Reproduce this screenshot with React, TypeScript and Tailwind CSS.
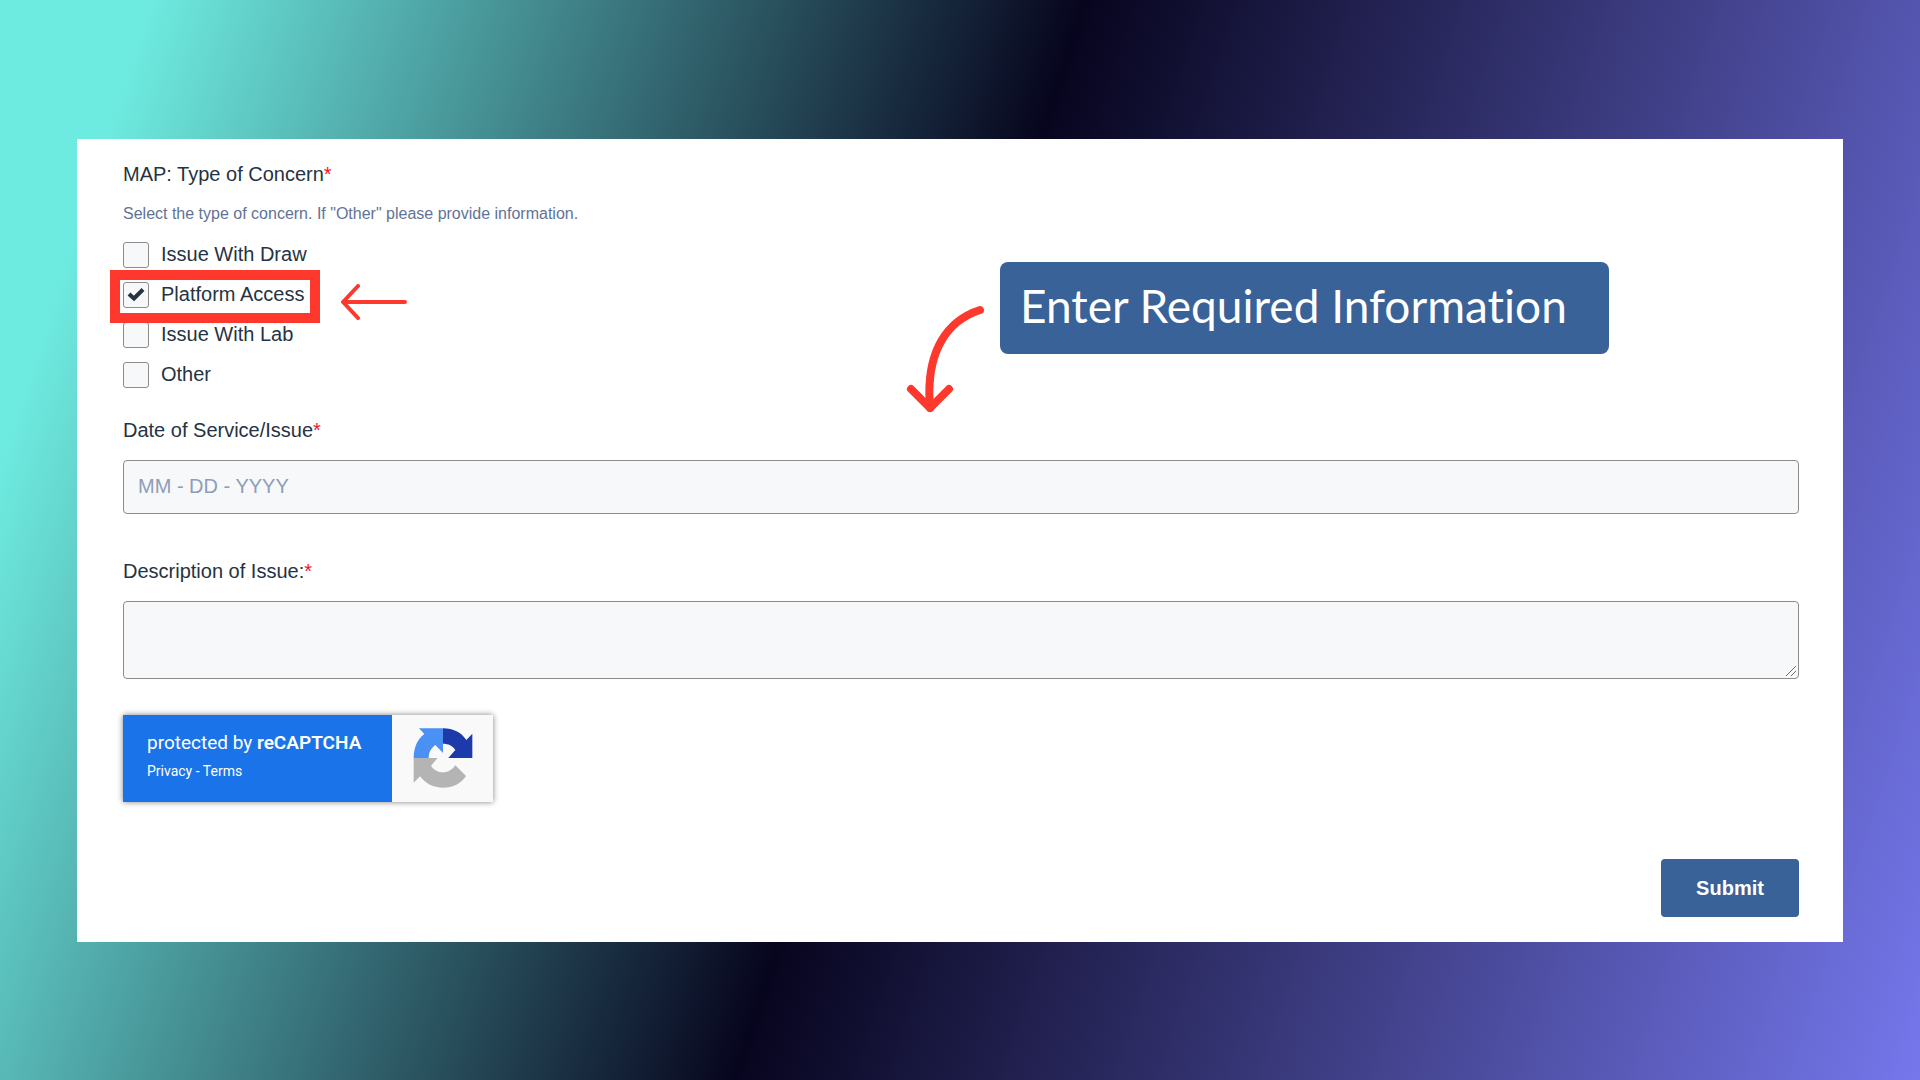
import { useState } from "react";

const CONCERNS = ["Issue With Draw", "Platform Access", "Issue With Lab", "Other"];
const HIGHLIGHTED = "Platform Access";

function Required() {
  return <span className="text-[#f5141c]">*</span>;
}

/** Short red arrow pointing at the highlighted option. */
function LeftArrow() {
  return (
    <svg
      className="absolute top-[14px] left-[230px] h-[36px] w-[68px]"
      viewBox="0 0 68 36"
      fill="none"
      stroke="#ff382d"
      strokeWidth="4"
      strokeLinecap="round"
      strokeLinejoin="round"
      aria-hidden="true"
    >
      <path d="M65 18H3M18 2L3 18L18 34" />
    </svg>
  );
}

function CurvedArrow() {
  return (
    <svg
      className="mt-[43px] h-[108px] w-[80px] shrink-0"
      viewBox="0 0 80 108"
      fill="none"
      stroke="#ff382d"
      strokeWidth="8"
      strokeLinecap="round"
      strokeLinejoin="round"
      aria-hidden="true"
    >
      <path d="M75 5C44 15 20 44 25 103" />
      <path d="M6 84L25 103L44 84" />
    </svg>
  );
}

function RecaptchaLogo() {
  return (
    <svg className="h-[60px] w-[60px]" viewBox="36 37 180 180" aria-hidden="true">
      <path fill="#4a90f5" d="M126 38H54L70 55C50 70 38 95 38 127H83C83 110 90 98 103 88L126 112Z" />
      <path fill="#1c3aa9" d="M126 38C157 38 180 50 196 73L214 54V127H142L163 103C155 90 142 84 126 84Z" />
      <path fill="#b4b4b4" d="M38 127H110L90 150C98 162 110 170 126 170C142 170 154 162 163 149L195 181C180 204 156 216 126 216C97 216 73 204 57 182L38 201Z" />
    </svg>
  );
}

function RecaptchaBadge() {
  return (
    <div className="flex h-[87px] w-[370px] bg-[#f9f9f9] font-['Roboto',sans-serif] text-white shadow-[0_0_6px_#808080]">
      <div className="w-[269px] bg-[#1a73e8] pt-4 pl-6">
        <p className="text-[19px] leading-6">
          protected by <strong className="font-semibold">reCAPTCHA</strong>
        </p>
        <p className="mt-1 text-sm leading-6">
          <a href="#privacy">Privacy</a> - <a href="#terms">Terms</a>
        </p>
      </div>
      <div className="flex flex-1 items-center justify-center">
        <RecaptchaLogo />
      </div>
    </div>
  );
}

type ConcernOptionProps = {
  label: string;
  checked: boolean;
  highlighted: boolean;
  onChange: () => void;
};

function ConcernOption({ label, checked, highlighted, onChange }: ConcernOptionProps) {
  return (
    <li className="relative h-10">
      <label className="flex items-start gap-3">
        <span className="relative flex h-[26px] w-[26px]">
          <input
            type="checkbox"
            checked={checked}
            onChange={onChange}
            className="h-full w-full appearance-none rounded-[3px] border border-[#8c8c8c] bg-[#f7f8fa]"
          />
          {checked && (
            <svg
              className="pointer-events-none absolute inset-0 h-full w-full"
              viewBox="0 0 26 26"
              fill="none"
              stroke="#253342"
              strokeWidth="4"
              aria-hidden="true"
            >
              <path d="M6 12L11 16.5L20 7.5" />
            </svg>
          )}
        </span>
        <span className="leading-6">{label}</span>
      </label>
      {highlighted && (
        <div className="pointer-events-none absolute -top-3 -left-[13px] z-10 h-[53px] w-[210px] border-[10px] border-[#ff382d]">
          <div className="absolute -top-[10px] -left-[10px]">
            <LeftArrow />
          </div>
        </div>
      )}
    </li>
  );
}

export default function App() {
  const [selected, setSelected] = useState<string[]>([HIGHLIGHTED]);

  const toggle = (label: string) =>
    setSelected((prev) =>
      prev.includes(label) ? prev.filter((l) => l !== label) : [...prev, label]
    );

  return (
    <div className="flex min-h-screen flex-col justify-center bg-[linear-gradient(108deg,#6eebe0_6.5%,#07051e_47.8%,#7577ec_100%)] px-[77px] font-['Liberation_Sans',Arial,sans-serif]">
      <form
        className="relative bg-white pt-[23px] pr-[44px] pb-[25px] pl-[46px] text-xl text-[#253342]"
        onSubmit={(e) => e.preventDefault()}
      >
        {/* Type of concern */}
        <fieldset>
          <legend className="leading-6">
            MAP: Type of Concern
            <Required />
          </legend>
          <p className="mt-4 text-base leading-6 text-[#5f7396]">
            Select the type of concern. If "Other" please provide information.
          </p>
          <ul className="mt-4">
            {CONCERNS.map((label) => (
              <ConcernOption
                key={label}
                label={label}
                checked={selected.includes(label)}
                highlighted={label === HIGHLIGHTED}
                onChange={() => toggle(label)}
              />
            ))}
          </ul>
        </fieldset>

        {/* Date */}
        <div className="mt-4">
          <label htmlFor="date" className="block leading-6">
            Date of Service/Issue
            <Required />
          </label>
          <input
            id="date"
            type="text"
            placeholder="MM - DD - YYYY"
            className="mt-[18px] block h-[54px] w-full rounded-[4px] border border-[#8c8c8c] bg-[#f7f8fa] px-3.5 placeholder:text-[#8e9db8]"
          />
        </div>

        {/* Description */}
        <div className="mt-[45px]">
          <label htmlFor="description" className="block leading-6">
            Description of Issue:
            <Required />
          </label>
          <div className="relative mt-[18px]">
            <textarea
              id="description"
              className="block h-[78px] w-full resize-none rounded-[4px] border border-[#8c8c8c] bg-[#f7f8fa] px-3.5 py-2"
            />
            {/* Resize grip */}
            <svg
              className="pointer-events-none absolute right-[2px] bottom-[2px] h-[12px] w-[12px]"
              viewBox="0 0 12 12"
              fill="none"
              stroke="#6f6f6f"
              aria-hidden="true"
            >
              <path d="M1 11L11 1M6 11L11 6" />
            </svg>
          </div>
        </div>

        <div className="mt-9">
          <RecaptchaBadge />
        </div>

        <div className="mt-[57px] flex justify-end">
          <button
            type="submit"
            className="h-[58px] w-[138px] rounded-[4px] bg-[#396298] font-bold text-white"
          >
            Submit
          </button>
        </div>

        {/* Callout over the form */}
        <div className="pointer-events-none absolute top-[123px] right-[234px] flex items-start gap-[15px]">
          <CurvedArrow />
          <p className="h-[92px] w-[609px] rounded-lg bg-[#396298] pl-5 font-['Lato',sans-serif] text-[46px] leading-[88px] text-white [font-variant-ligatures:none]">
            Enter Required Information
          </p>
        </div>
      </form>
    </div>
  );
}
